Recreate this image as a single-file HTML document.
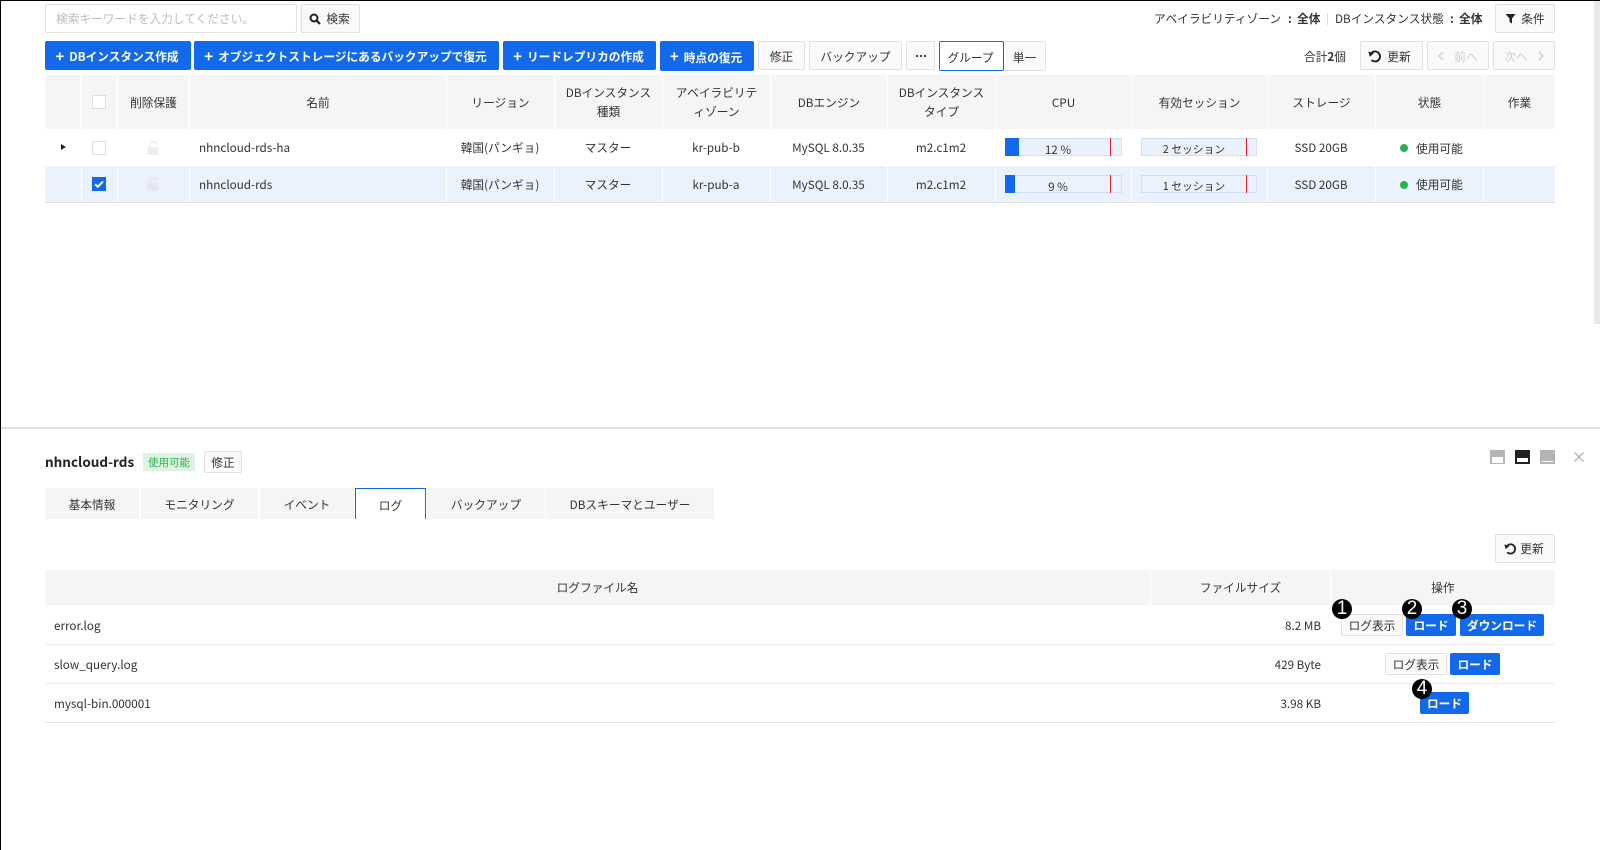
<!DOCTYPE html>
<html lang="ja"><head><meta charset="utf-8"><title>RDS</title>
<style>
html,body{margin:0;padding:0;background:#fff}
#p{position:relative;width:1600px;height:850px;overflow:hidden;background:#fff;font-family:"Noto Sans CJK JP","Liberation Sans",sans-serif;font-size:11.7px;color:#333}
#p div,#p span.a{position:absolute;box-sizing:border-box;white-space:nowrap}
.c{display:flex;align-items:center;justify-content:center}
.b{background:#1269ea;color:#fff;border-radius:2px;font-weight:700;display:flex;align-items:center;justify-content:center}
.b i{font-style:normal;font-size:15px;line-height:12px;margin-right:5px;font-weight:700;margin-left:-2px}
.w{background:#fafafa;border:1px solid #e1e1e1;border-radius:2px;display:flex;align-items:center;justify-content:center;color:#333}
.u{padding-top:2px}
.t{padding-top:2px}
.h{background:#f5f5f5;top:75px;height:54px;display:flex;align-items:center;justify-content:center;text-align:center;line-height:19px;white-space:normal!important}
.r{display:flex;align-items:center;justify-content:center;height:36px}
.n{width:20px;height:20px;border-radius:50%;background:#000;color:#fff;display:flex;align-items:center;justify-content:center;font-family:"Liberation Sans",sans-serif;font-size:19px;font-weight:400}
svg{display:block;flex:none}
</style></head><body><div id="p">
<div style="left:0;top:0;width:1600px;height:1px;background:#000"></div>
<div style="left:0;top:0;width:1px;height:850px;background:#000"></div>
<div style="left:1594px;top:1px;width:6px;height:323px;background:#e9e9e9"></div>

<div style="left:45px;top:4px;width:252px;height:29px;border:1px solid #e1e1e1;border-radius:2px;color:#bbb;padding-left:10px;line-height:27px">検索キーワードを入力してください。</div>
<div class="w" style="left:301px;top:4px;width:59px;height:29px;padding-right:2px"><svg width="12" height="12" viewBox="0 0 12 12" style="margin-right:5px"><circle cx="5" cy="5" r="3.500" fill="none" stroke="#222" stroke-width="2"/><path d="M7.500 7.500l3.500 3.500" stroke="#222" stroke-width="2.200"/></svg>検索</div>

<div style="left:1154px;top:9px;line-height:20px">アベイラビリティゾーン</div>
<div style="left:1288px;top:9px;line-height:20px;font-weight:700">:</div>
<div style="left:1297px;top:9px;line-height:20px;font-weight:700">全体</div>
<div style="left:1327px;top:13px;width:1px;height:12px;background:#ddd"></div>
<div style="left:1335px;top:9px;line-height:20px">DBインスタンス状態</div>
<div style="left:1450px;top:9px;line-height:20px;font-weight:700">:</div>
<div style="left:1459px;top:9px;line-height:20px;font-weight:700">全体</div>
<div class="w" style="left:1495px;top:4px;width:60px;height:29px"><svg width="11" height="11" viewBox="0 0 11 11" style="margin-right:5px"><path d="M0.500 1h10L7 5.500V10.500L4.500 9V5.500z" fill="#222"/></svg>条件</div>

<div class="b u" style="left:45px;top:41px;width:146px;height:29px"><i>+</i>DBインスタンス作成</div>
<div class="b u" style="left:194px;top:41px;width:305px;height:29px"><i>+</i>オブジェクトストレージにあるバックアップで復元</div>
<div class="b u" style="left:503px;top:41px;width:153px;height:29px"><i>+</i>リードレプリカの作成</div>
<div class="b u" style="left:660px;top:41px;width:94px;height:30px"><i>+</i>時点の復元</div>
<div class="w u" style="left:758px;top:41px;width:47px;height:29px">修正</div>
<div class="w u" style="left:809px;top:41px;width:93px;height:29px">バックアップ</div>
<div class="w" style="left:906px;top:41px;width:29px;height:29px"><svg width="10" height="4" viewBox="0 0 10 4"><circle cx="1" cy="2" r="1.100" fill="#333"/><circle cx="5" cy="2" r="1.100" fill="#333"/><circle cx="9" cy="2" r="1.100" fill="#333"/></svg></div>
<div class="w u" style="left:1003px;top:41px;width:43px;height:30px;border-radius:0 2px 2px 0">単一</div>
<div class="c u" style="left:939px;top:41px;width:65px;height:30px;border:1px solid #1269ea;border-radius:2px;background:#fff;padding-right:2px">グループ</div>
<div style="left:1304px;top:47px;line-height:20px">合計<b>2</b>個</div>
<div class="w u" style="left:1360px;top:41px;width:63px;height:29px;padding-right:4px"><svg width="14" height="14" viewBox="0 0 14 14" style="margin-right:5px;margin-top:-2px"><path d="M3.500 11A5 5 0 1 0 3 4.500" fill="none" stroke="#222" stroke-width="1.900"/><path d="M0.300 2.500l5.500 2-4 3.200z" fill="#222"/></svg>更新</div>
<div class="w u" style="left:1427px;top:41px;width:62px;height:29px;color:#ccc"><svg width="6" height="10" viewBox="0 0 6 10" style="margin-right:10px;margin-top:-2px"><path d="M5 1L1 5l4 4" fill="none" stroke="#ccc" stroke-width="1.400"/></svg>前へ</div>
<div class="w u" style="left:1493px;top:41px;width:62px;height:29px;color:#ccc">次へ<svg width="6" height="10" viewBox="0 0 6 10" style="margin-left:10px;margin-top:-2px"><path d="M1 1l4 4-4 4" fill="none" stroke="#ccc" stroke-width="1.400"/></svg></div>

<!-- table header -->
<div class="h" style="left:45px;width:35px"></div>
<div class="h" style="left:82px;width:35px"></div>
<div class="h" style="left:118px;width:71px">削除保護</div>
<div class="h" style="left:190px;width:256px">名前</div>
<div class="h" style="left:446px;width:108px;border-left:1px solid #fff">リージョン</div>
<div class="h" style="left:554px;width:108px;border-left:1px solid #fff">DBインスタンス<br>種類</div>
<div class="h" style="left:662px;width:108px;border-left:1px solid #fff">アベイラビリテ<br>ィゾーン</div>
<div class="h" style="left:770px;width:117px;border-left:1px solid #fff">DBエンジン</div>
<div class="h" style="left:887px;width:108px;border-left:1px solid #fff">DBインスタンス<br>タイプ</div>
<div class="h" style="left:996px;width:135px">CPU</div>
<div class="h" style="left:1132px;width:135px">有効セッション</div>
<div class="h" style="left:1268px;width:107px">ストレージ</div>
<div class="h" style="left:1376px;width:107px">状態</div>
<div class="h" style="left:1484px;width:71px">作業</div>
<div style="left:92px;top:95px;width:14px;height:14px;border:1px solid #ddd;background:#fff"></div>

<!-- row 1 -->
<div style="left:61px;top:144px;width:0;height:0;border-left:5px solid #222;border-top:3.500px solid transparent;border-bottom:3.500px solid transparent"></div>
<div style="left:92px;top:141px;width:14px;height:14px;border:1px solid #ddd;background:#fff"></div>
<svg class="lk" width="12" height="14" viewBox="0 0 12 14" style="position:absolute;left:147px;top:141px"><path d="M3 6V3.500a3 3 0 0 1 6 0" fill="none" stroke="#eee" stroke-width="1.800"/><rect x="0.500" y="6" width="11" height="8" fill="#eee"/></svg>
<div class="r" style="left:199px;top:129px">nhncloud-rds-ha</div>
<div class="r" style="left:446px;top:129px;width:108px">韓国(パンギョ)</div>
<div class="r" style="left:554px;top:129px;width:108px">マスター</div>
<div class="r" style="left:662px;top:129px;width:108px">kr-pub-b</div>
<div class="r" style="left:770px;top:129px;width:117px">MySQL 8.0.35</div>
<div class="r" style="left:887px;top:129px;width:108px">m2.c1m2</div>
<div style="left:1005px;top:138px;width:117px;height:18px;background:#ebf1fc;border:1px solid #cfe0f9"></div>
<div style="left:1005px;top:138px;width:14px;height:18px;background:#1269ea"></div>
<div style="left:1110px;top:138px;width:1px;height:18px;background:#e0202c"></div>
<div class="c" style="left:1005px;top:140px;width:106px;height:18px">12 %</div>
<div style="left:1141px;top:138px;width:116px;height:18px;background:#ebf1fc;border:1px solid #cfe0f9"></div>
<div style="left:1246px;top:138px;width:1px;height:18px;background:#e0202c"></div>
<div class="c" style="left:1141px;top:140px;width:106px;height:18px;font-size:10.800px">2 セッション</div>
<div class="r" style="left:1267px;top:129px;width:108px">SSD 20GB</div>
<div style="left:1400px;top:144px;width:8px;height:8px;border-radius:50%;background:#2ab14d"></div>
<div class="r" style="left:1416px;top:130px">使用可能</div>

<!-- row 2 -->
<div style="left:45px;top:166px;width:1510px;height:36px;background:#ebf2fd"></div>
<div style="left:45px;top:202px;width:1510px;height:1px;background:#e1e1e1"></div>
<div style="left:81px;top:166px;width:1px;height:36px;background:#fff"></div>
<div style="left:117px;top:166px;width:1px;height:36px;background:#fff"></div>
<div style="left:189px;top:166px;width:1px;height:36px;background:#fff"></div>
<div style="left:446px;top:166px;width:1px;height:36px;background:#fff"></div>
<div style="left:554px;top:166px;width:1px;height:36px;background:#fff"></div>
<div style="left:662px;top:166px;width:1px;height:36px;background:#fff"></div>
<div style="left:770px;top:166px;width:1px;height:36px;background:#fff"></div>
<div style="left:887px;top:166px;width:1px;height:36px;background:#fff"></div>
<div style="left:995px;top:166px;width:1px;height:36px;background:#fff"></div>
<div style="left:1131px;top:166px;width:1px;height:36px;background:#fff"></div>
<div style="left:1267px;top:166px;width:1px;height:36px;background:#fff"></div>
<div style="left:1375px;top:166px;width:1px;height:36px;background:#fff"></div>
<div style="left:1483px;top:166px;width:1px;height:36px;background:#fff"></div>
<div style="left:92px;top:177px;width:14px;height:14px;background:#1269ea"></div>
<svg width="14" height="14" viewBox="0 0 14 14" style="position:absolute;left:92px;top:177px"><path d="M3 7.200l2.800 2.600L11 4.400" fill="none" stroke="#fff" stroke-width="2"/></svg>
<svg width="12" height="14" viewBox="0 0 12 14" style="position:absolute;left:147px;top:177px"><path d="M3 6V3.500a3 3 0 0 1 6 0" fill="none" stroke="#e4e7ec" stroke-width="1.800"/><rect x="0.500" y="6" width="11" height="8" fill="#e4e7ec"/></svg>
<div class="r" style="left:199px;top:166px">nhncloud-rds</div>
<div class="r" style="left:446px;top:166px;width:108px">韓国(パンギョ)</div>
<div class="r" style="left:554px;top:166px;width:108px">マスター</div>
<div class="r" style="left:662px;top:166px;width:108px">kr-pub-a</div>
<div class="r" style="left:770px;top:166px;width:117px">MySQL 8.0.35</div>
<div class="r" style="left:887px;top:166px;width:108px">m2.c1m2</div>
<div style="left:1005px;top:175px;width:117px;height:18px;border:1px solid #cfe0f9"></div>
<div style="left:1005px;top:175px;width:10px;height:18px;background:#1269ea"></div>
<div style="left:1110px;top:175px;width:1px;height:18px;background:#e0202c"></div>
<div class="c" style="left:1005px;top:177px;width:106px;height:18px">9 %</div>
<div style="left:1141px;top:175px;width:116px;height:18px;border:1px solid #cfe0f9"></div>
<div style="left:1246px;top:175px;width:1px;height:18px;background:#e0202c"></div>
<div class="c" style="left:1141px;top:177px;width:106px;height:18px;font-size:10.800px">1 セッション</div>
<div class="r" style="left:1267px;top:166px;width:108px">SSD 20GB</div>
<div style="left:1400px;top:181px;width:8px;height:8px;border-radius:50%;background:#2ab14d"></div>
<div class="r" style="left:1416px;top:166px">使用可能</div>

<!-- lower panel -->
<div style="left:1px;top:427px;width:1599px;height:2px;background:#e1e1e1"></div>
<div style="left:45px;top:450px;font-size:13.500px;font-weight:700;line-height:22px;color:#222">nhncloud-rds</div>
<div class="c" style="left:143px;top:453px;width:52px;height:18px;background:#dff3e3;color:#2ab14d;font-size:10.500px">使用可能</div>
<div class="w" style="left:204px;top:451px;width:38px;height:22px">修正</div>
<div style="left:1490px;top:450px;width:15px;height:14px;background:#b4b4b4"></div><div style="left:1492px;top:457px;width:11px;height:6px;background:#fff"></div>
<div style="left:1515px;top:450px;width:15px;height:14px;background:#222"></div><div style="left:1517px;top:458px;width:11px;height:4px;background:#fff"></div>
<div style="left:1540px;top:450px;width:15px;height:14px;background:#b4b4b4"></div><div style="left:1542px;top:461px;width:11px;height:1px;background:#fff"></div>
<svg width="10" height="10" viewBox="0 0 10 10" style="position:absolute;left:1574px;top:452px"><path d="M0.500 0.500l9 9M9.500 0.500l-9 9" stroke="#bbb" stroke-width="1.500"/></svg>

<div class="c t" style="left:45px;top:488px;width:94px;height:31px;background:#f5f5f5">基本情報</div>
<div class="c t" style="left:141px;top:488px;width:117px;height:31px;background:#f5f5f5">モニタリング</div>
<div class="c t" style="left:260px;top:488px;width:94px;height:31px;background:#f5f5f5">イベント</div>
<div class="c t" style="left:355px;top:488px;width:71px;height:31px;border:1px solid #1269ea;border-bottom:0;background:#fff">ログ</div>
<div class="c t" style="left:427px;top:488px;width:118px;height:31px;background:#f5f5f5">バックアップ</div>
<div class="c t" style="left:546px;top:488px;width:168px;height:31px;background:#f5f5f5">DBスキーマとユーザー</div>

<div class="w" style="left:1495px;top:534px;width:60px;height:29px;padding-right:2px"><svg width="13" height="13" viewBox="0 0 14 14" style="margin-right:3px"><path d="M3.500 11A5 5 0 1 0 3 4.500" fill="none" stroke="#222" stroke-width="1.900"/><path d="M0.300 2.500l5.500 2-4 3.200z" fill="#222"/></svg>更新</div>

<div class="c" style="left:45px;top:570px;width:1105px;height:35px;background:#f5f5f5">ログファイル名</div>
<div class="c" style="left:1151px;top:570px;width:179px;height:35px;background:#f5f5f5">ファイルサイズ</div>
<div class="c" style="left:1331px;top:570px;width:224px;height:35px;background:#f5f5f5">操作</div>

<div style="left:54px;top:616px;line-height:20px">error.log</div>
<div style="left:1221px;width:100px;text-align:right;top:616px;line-height:20px">8.2 MB</div>
<div style="left:45px;top:644px;width:1510px;height:1px;background:#eee"></div>
<div style="left:54px;top:655px;line-height:20px">slow_query.log</div>
<div style="left:1221px;width:100px;text-align:right;top:655px;line-height:20px">429 Byte</div>
<div style="left:45px;top:683px;width:1510px;height:1px;background:#eee"></div>
<div style="left:54px;top:694px;line-height:20px">mysql-bin.000001</div>
<div style="left:1221px;width:100px;text-align:right;top:694px;line-height:20px">3.98 KB</div>
<div style="left:45px;top:722px;width:1510px;height:1px;background:#e1e1e1"></div>

<div class="w" style="left:1341px;top:614px;width:62px;height:22px">ログ表示</div>
<div class="b" style="left:1406px;top:614px;width:50px;height:22px">ロード</div>
<div class="b" style="left:1460px;top:614px;width:84px;height:22px">ダウンロード</div>
<div class="w" style="left:1385px;top:653px;width:62px;height:22px">ログ表示</div>
<div class="b" style="left:1450px;top:653px;width:50px;height:22px">ロード</div>
<div class="b" style="left:1420px;top:692px;width:49px;height:22px">ロード</div>

<div class="n" style="left:1332px;top:599px">1</div>
<div class="n" style="left:1402px;top:599px">2</div>
<div class="n" style="left:1452px;top:599px">3</div>
<div class="n" style="left:1412px;top:679px">4</div>
</div></body></html>
